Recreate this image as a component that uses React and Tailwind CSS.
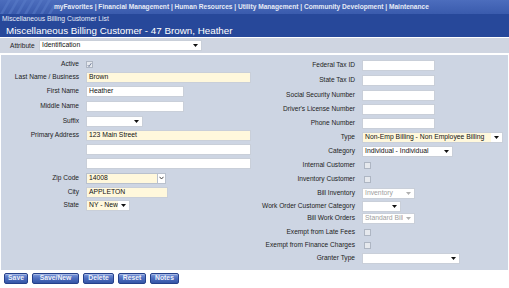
import React from "react";

function Arrow({ disabled }) {
  return (
    <svg width="5" height="3" viewBox="0 0 5 3" className="shrink-0">
      <path d="M0 0 H5 L2.5 3 Z" fill={disabled ? "#b0b0b0" : "#111"} />
    </svg>
  );
}

function Input({ w, cream, value }) {
  return (
    <div
      className={`${w} h-[11px] border border-[#c9cfd9] ${cream ? "bg-[#fff8dc]" : "bg-white"} flex items-center pl-[2px] text-[6.8px] text-[#111] overflow-hidden whitespace-nowrap`}
    >
      {value}
    </div>
  );
}

function Select({ w, cream, value, disabled }) {
  return (
    <div className={`${w} h-[11px] border border-[#c9cfd9] bg-white flex items-center overflow-hidden`}>
      <div
        className={`flex-1 h-full flex items-center pl-[2px] text-[6.8px] whitespace-nowrap overflow-hidden ${cream ? "bg-[#fff8dc]" : ""} ${disabled ? "text-[#a0a0a0]" : "text-[#111]"}`}
      >
        {value}
      </div>
      <div className="w-[11px] h-full flex items-center justify-center shrink-0">
        <Arrow disabled={disabled} />
      </div>
    </div>
  );
}

function Combo({ w, value }) {
  return (
    <div className={`${w} h-[11px] border border-[#b9c1cd] bg-[#fff8dc] flex items-center`}>
      <div className="flex-1 pl-[2px] text-[6.8px] text-[#111]">{value}</div>
      <div className="w-[8px] h-full border-l border-[#b9c1cd] bg-white flex items-center justify-center">
        <svg width="5" height="4" viewBox="0 0 5 4">
          <path d="M0.5 0.8 L2.5 3 L4.5 0.8" stroke="#333" strokeWidth="0.9" fill="none" />
        </svg>
      </div>
    </div>
  );
}

function Check({ checked, className = "" }) {
  return (
    <span className={`w-[7px] h-[7px] border border-[#aeb6c3] bg-[#e6e9ee] flex items-center justify-center ${className}`}>
      {checked && (
        <svg width="6" height="6" viewBox="0 0 6 6">
          <path d="M1 3.2 L2.4 4.8 L5.2 0.8" stroke="#4a5a80" strokeWidth="0.9" fill="none" />
        </svg>
      )}
    </span>
  );
}

function Row({ h, label, lw, children }) {
  return (
    <div className={`${h} flex items-center`}>
      <div className={`${lw} text-right text-[6.6px] text-[#222] whitespace-nowrap leading-none`}>{label}</div>
      <div className="ml-[7px] flex items-center">{children}</div>
    </div>
  );
}

function Btn({ w, children }) {
  return (
    <button
      className={`${w} h-[11px] rounded-[2px] border border-[#25408a] bg-gradient-to-b from-[#7a97da] via-[#4d6dbe] to-[#3556a6] text-[#eef1f8] text-[6.8px] font-bold leading-none flex items-center justify-center shadow-[inset_0_1px_0_rgba(255,255,255,0.35)]`}
    >
      {children}
    </button>
  );
}

export default function App() {
  const L = "w-[78px]";
  const R = "w-[101px]";
  return (
    <div className="w-[509px] h-[288px] bg-white overflow-hidden font-['Liberation_Sans',Arial,sans-serif]">
      {/* nav */}
      <div className="h-[14px] bg-gradient-to-b from-[#4c6dbd] to-[#3a5bad] flex items-center">
        <svg width="54" height="14" viewBox="0 0 54 14" className="shrink-0">
          {[0, 8, 16, 24, 32, 40, 48].map((x) => (
            <path key={x} d={`M${x} 14 L${x + 8} 0 L${x + 11} 0 L${x + 3} 14 Z`} fill="#5a7bc8" opacity="0.55" />
          ))}
        </svg>
        <div className="text-[6.6px] font-bold text-[#e6ebf6] whitespace-nowrap leading-none">
          myFavorites | Financial Management | Human Resources | Utility Management | Community Development | Maintenance
        </div>
      </div>
      {/* title */}
      <div className="h-[23px] bg-[#27489a] flex flex-col justify-start pt-[2px]">
        <div className="pl-[2px] text-[6.8px] text-[#e6ebf6] leading-none">Miscellaneous Billing Customer List</div>
        <div className="pl-[6px] mt-[3px] text-[9.8px] text-white leading-none">
          Miscellaneous Billing Customer - 47 Brown, Heather
        </div>
      </div>
      <div className="h-[1px] bg-white" />
      {/* attribute */}
      <div className="h-[15px] bg-[#cfd5e1] flex items-center">
        <div className="pl-[10px] w-[39px] text-[6.6px] text-[#222]">Attribute</div>
        <Select w="w-[163px]" value="Identification" />
      </div>
      <div className="h-[2px] bg-white" />
      {/* panel */}
      <div className="mx-[1px] h-[215px] bg-[#cdd5e3] pt-[3px] flex">
        <div className="w-[253px] flex flex-col">
          <Row h="h-[13px]" lw={L} label="Active">
            <Check checked />
          </Row>
          <Row h="h-[13px]" lw={L} label="Last Name / Business">
            <Input w="w-[165px]" cream value="Brown" />
          </Row>
          <Row h="h-[15px]" lw={L} label="First Name">
            <Input w="w-[98px]" value="Heather" />
          </Row>
          <Row h="h-[15px]" lw={L} label="Middle Name">
            <Input w="w-[98px]" />
          </Row>
          <Row h="h-[14px]" lw={L} label="Suffix">
            <Select w="w-[57px]" />
          </Row>
          <Row h="h-[14px]" lw={L} label="Primary Address">
            <Input w="w-[165px]" cream value="123 Main Street" />
          </Row>
          <Row h="h-[14px]" lw={L} label="">
            <Input w="w-[165px]" />
          </Row>
          <Row h="h-[15px]" lw={L} label="">
            <Input w="w-[165px]" />
          </Row>
          <Row h="h-[14px]" lw={L} label="Zip Code">
            <Combo w="w-[80px]" value="14008" />
          </Row>
          <Row h="h-[14px]" lw={L} label="City">
            <Input w="w-[82px]" cream value="APPLETON" />
          </Row>
          <Row h="h-[13px]" lw={L} label="State">
            <Select w="w-[44px]" cream value="NY - New York" />
          </Row>
        </div>
        <div className="flex-1 flex flex-col">
          <Row h="h-[15px]" lw={R} label="Federal Tax ID">
            <Input w="w-[73px]" />
          </Row>
          <Row h="h-[15px]" lw={R} label="State Tax ID">
            <Input w="w-[73px]" />
          </Row>
          <Row h="h-[14px]" lw={R} label="Social Security Number">
            <Input w="w-[73px]" />
          </Row>
          <Row h="h-[15px]" lw={R} label="Driver's License Number">
            <Input w="w-[73px]" />
          </Row>
          <Row h="h-[13px]" lw={R} label="Phone Number">
            <Input w="w-[73px]" />
          </Row>
          <Row h="h-[14px]" lw={R} label="Type">
            <Select w="w-[141px]" cream value="Non-Emp Billing - Non Employee Billing" />
          </Row>
          <Row h="h-[14px]" lw={R} label="Category">
            <Select w="w-[91px]" value="Individual - Individual" />
          </Row>
          <Row h="h-[14px]" lw={R} label="Internal Customer">
            <Check className="ml-[2px]" />
          </Row>
          <Row h="h-[14px]" lw={R} label="Inventory Customer">
            <Check className="ml-[2px]" />
          </Row>
          <Row h="h-[14px]" lw={R} label="Bill Inventory">
            <Select w="w-[53px]" disabled value="Inventory" />
          </Row>
          <Row h="h-[12px]" lw={R} label="Work Order Customer Category">
            <Select w="w-[39px]" />
          </Row>
          <Row h="h-[13px]" lw={R} label="Bill Work Orders">
            <Select w="w-[53px]" disabled value="Standard Bill" />
          </Row>
          <Row h="h-[14px]" lw={R} label="Exempt from Late Fees">
            <Check className="ml-[2px]" />
          </Row>
          <Row h="h-[13px]" lw={R} label="Exempt from Finance Charges">
            <Check className="ml-[2px]" />
          </Row>
          <Row h="h-[13px]" lw={R} label="Granter Type">
            <Select w="w-[98px]" />
          </Row>
        </div>
      </div>
      {/* buttons */}
      <div className="flex pl-[4px] pt-[3px] gap-[4px]">
        <Btn w="w-[24px]">Save</Btn>
        <Btn w="w-[47px]">Save/New</Btn>
        <Btn w="w-[31px]">Delete</Btn>
        <Btn w="w-[28px]">Reset</Btn>
        <Btn w="w-[29px]">Notes</Btn>
      </div>
    </div>
  );
}
